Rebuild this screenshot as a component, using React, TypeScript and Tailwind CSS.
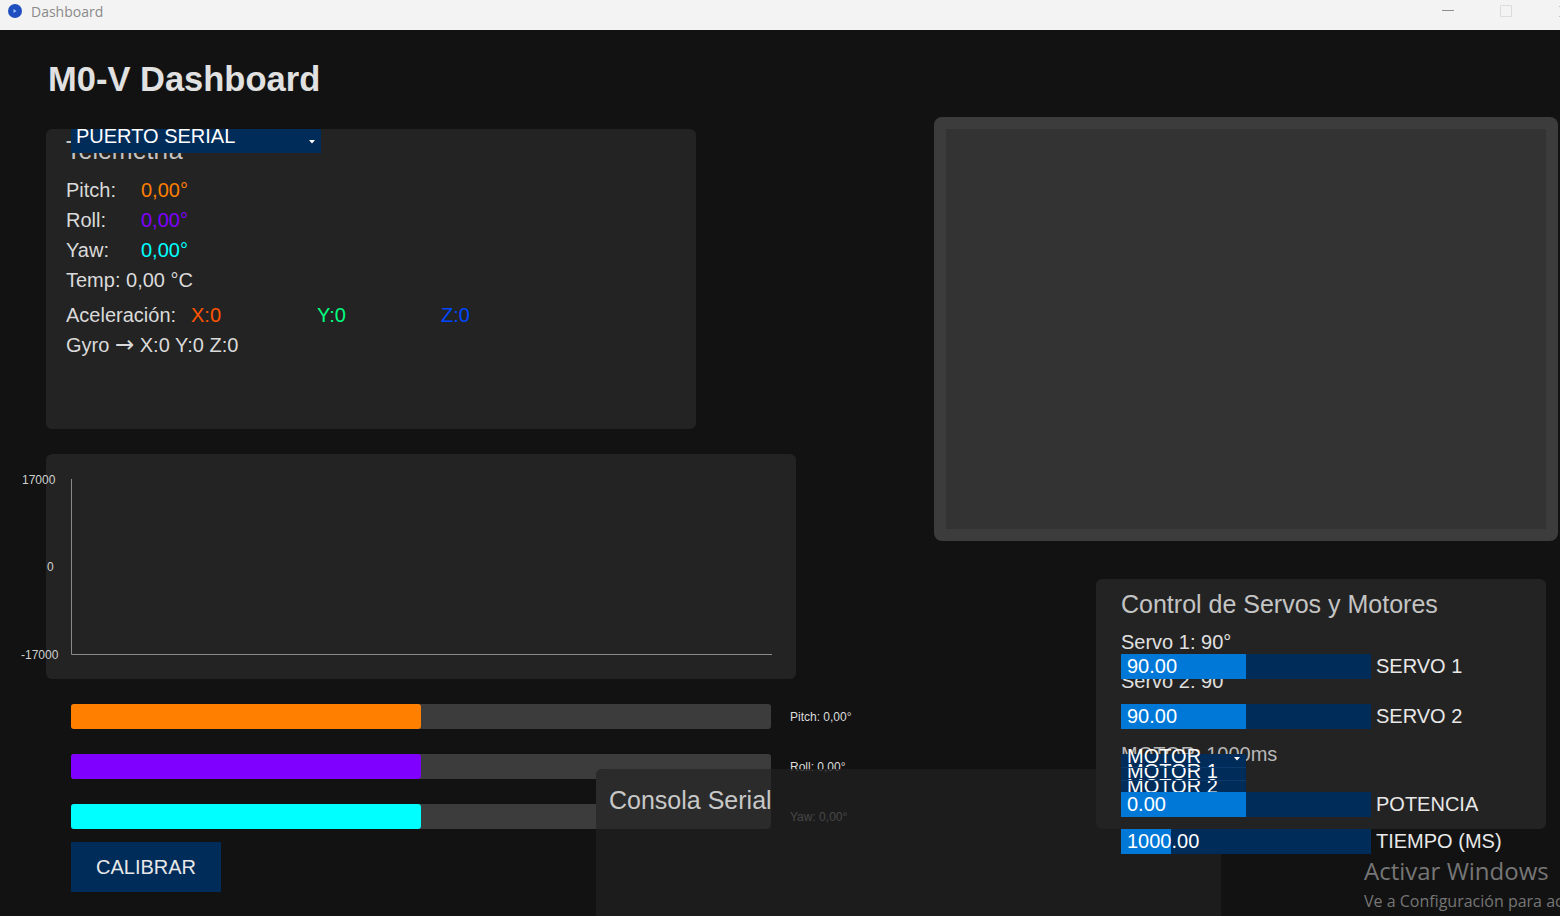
import React from 'react';

const sans = "font-['Liberation_Sans',Arial,sans-serif]";

function TitleBar() {
  return (
    <div className="flex h-[30px] items-start overflow-hidden bg-[#f3f3f3]">
      <div className="ml-[8px] mt-[4px] flex h-[14px] w-[14px] items-center justify-center rounded-full bg-[#1f4fbf]">
        <svg width="6" height="6" viewBox="0 0 6 6">
          <path d="M1.5 1 L4.5 3 L1.5 5 Z" fill="#9fc3ff" />
        </svg>
      </div>
      <span className="ml-[9px] pt-[2px] font-['Open_Sans',sans-serif] text-[14px] leading-[20px] text-[#8a8a8a]">
        Dashboard
      </span>
      <div className="flex-1" />
      <div className="mr-[-33px] flex">
        <div className="flex h-[30px] w-[58px] justify-center pt-[10px]">
          <div className="h-[1px] w-[12px] bg-[#8c8c8c]" />
        </div>
        <div className="flex h-[30px] w-[58px] justify-center pt-[5px]">
          <div className="h-[12px] w-[12px] rounded-[1px] border border-[#dcdcdc]" />
        </div>
        <div className="flex h-[30px] w-[58px] justify-center pt-[6px]">
          <svg width="11" height="11" viewBox="0 0 11 11">
            <path d="M0.5 0.5 L10.5 10.5 M10.5 0.5 L0.5 10.5" stroke="#8c8c8c" strokeWidth="1" />
          </svg>
        </div>
      </div>
    </div>
  );
}

function TeleRow({ label, value, color }: { label: string; value: string; color: string }) {
  return (
    <div className="flex h-[30px] items-center text-[20px] leading-[30px]">
      <span className="w-[75px] text-[#dadada]">{label}</span>
      <span className={color}>{value}</span>
    </div>
  );
}

function Telemetry() {
  return (
    <div className="relative mt-[32px] h-[300px] w-[650px] rounded-[6px] bg-[#232323] pl-[20px] pt-[6px]">
      <div className="text-[25px] leading-[30px] text-[#c4c4c4]">Telemetría</div>
      <div className="mt-[10px]">
        <TeleRow label="Pitch:" value="0,00°" color="text-[#ff7f00]" />
        <TeleRow label="Roll:" value="0,00°" color="text-[#8000ff]" />
        <TeleRow label="Yaw:" value="0,00°" color="text-[#00ffff]" />
        <div className="h-[30px] text-[20px] leading-[30px] text-[#dadada]">Temp: 0,00 °C</div>
        <div className="mt-[5px] flex h-[30px] items-center text-[20px] leading-[30px]">
          <span className="w-[125px] text-[#dadada]">Aceleración:</span>
          <span className="w-[126px] text-[#ff5500]">X:0</span>
          <span className="w-[124px] text-[#00ff80]">Y:0</span>
          <span className="text-[#0048ff]">Z:0</span>
        </div>
        <div className="h-[30px] text-[20px] leading-[30px] text-[#dadada]">
          Gyro <span className="font-['DejaVu_Sans',sans-serif] text-[23px] leading-[20px]">→</span> X:0 Y:0 Z:0
        </div>
      </div>

      {/* combo de puerto, encima del título */}
      <div className="absolute left-[25px] top-0 h-[24px] w-[250px] overflow-hidden bg-[#002c5a]">
        <span className="absolute left-[5px] top-[-3px] text-[20px] leading-[20px] text-white">PUERTO SERIAL</span>
        <svg className="absolute right-[6px] top-[11px]" width="6" height="4" viewBox="0 0 6 4">
          <path d="M0 0 H6 L3 3.5 Z" fill="#ffffff" />
        </svg>
      </div>
    </div>
  );
}

function Chart() {
  return (
    <div className="relative mt-[25px] h-[225px] w-[750px] rounded-[6px] bg-[#232323] text-[12px] leading-[14px] text-[#cfcfcf]">
      <span className="absolute left-[-24px] top-[19px]">17000</span>
      <span className="absolute left-[1px] top-[106px]">0</span>
      <span className="absolute left-[-25px] top-[194px]">-17000</span>
      <svg className="absolute left-[25px] top-[25px]" width="702" height="177" viewBox="0 0 702 177">
        <path d="M0.5 0 V175.5 H701" stroke="#8a8a8a" strokeWidth="1" fill="none" />
      </svg>
    </div>
  );
}

function Bar({ fill, label }: { fill: string; label: string }) {
  return (
    <div className="flex h-[25px] items-center">
      <div className="h-[25px] w-[700px] rounded-[3px] bg-[#3c3c3c]">
        <div className={`h-full w-[350px] rounded-[3px] ${fill}`} />
      </div>
      <span className="ml-[19px] text-[12px] leading-[14px] text-[#dcdcdc]">{label}</span>
    </div>
  );
}

function LeftColumn() {
  return (
    <div className="flex flex-col items-start pl-[46px] pt-[30px]">
      <h1 className="ml-[2px] mt-[2px] h-[35px] text-[34.5px] font-bold leading-[35px] text-[#e1e1e1]">M0-V Dashboard</h1>
      <Telemetry />
      <Chart />
      <div className="mt-[25px] flex flex-col gap-[25px] pl-[25px]">
        <Bar fill="bg-[#ff8000]" label="Pitch: 0,00°" />
        <Bar fill="bg-[#8000ff]" label="Roll: 0,00°" />
        <Bar fill="bg-[#00ffff]" label="Yaw: 0,00°" />
      </div>
      <button className="ml-[25px] mt-[13px] flex h-[50px] w-[150px] items-center justify-center bg-[#002c5a] text-[20px] text-[#e8e8e8]">
        CALIBRAR
      </button>
    </div>
  );
}

function Slider({ value, grab, label }: { value: string; grab: string; label: string }) {
  return (
    <div className="relative z-10 flex h-[25px] items-center">
      <div className="relative h-[25px] w-[250px] bg-[#002c5a]">
        <div className={`h-full bg-[#0078d7] ${grab}`} />
        <span className="absolute left-[6px] top-0 text-[20px] leading-[25px] text-white">{value}</span>
      </div>
      <span className="ml-[5px] text-[20px] leading-[25px] text-[#e8e8e8]">{label}</span>
    </div>
  );
}

function ControlPanel() {
  return (
    <div className="absolute left-[1096px] top-[549px] h-[250px] w-[450px] rounded-[6px] bg-[#232323] pl-[25px] pt-[10px]">
      <div className="text-[25px] leading-[30px] text-[#c4c4c4]">Control de Servos y Motores</div>
      <div className="mt-[13px] text-[20px] leading-[20px] text-[#e0e0e0]">Servo 1: 90°</div>
      <div className="mt-[2px]">
        <Slider value="90.00" grab="w-[125px]" label="SERVO 1" />
      </div>
      <div className="mt-[-8px] text-[20px] leading-[20px] text-[#e0e0e0]">Servo 2: 90°</div>
      <div className="mt-[13px]">
        <Slider value="90.00" grab="w-[125px]" label="SERVO 2" />
      </div>
      <div className="mt-[15px] text-[20px] leading-[20px] text-[#b8b8b8]">MOTOR: 1000ms</div>
      <div className="relative z-10 mt-[-10px] h-[38px] w-[125px] bg-[#002c5a]">
        <div className="absolute left-[6px] top-[-5px] whitespace-nowrap text-[20px] leading-[15px] text-white">
          <div>MOTOR</div>
          <div>MOTOR 1</div>
          <div>MOTOR 2</div>
        </div>
        <div className="absolute left-0 top-[13px] h-[1px] w-full bg-[#0a3a6c]" />
        <div className="absolute left-0 top-[26px] h-[1px] w-full bg-[#0a3a6c]" />
        <svg className="absolute right-[6px] top-[3px]" width="6" height="4" viewBox="0 0 6 4">
          <path d="M0 0 H6 L3 3.5 Z" fill="#ffffff" />
        </svg>
      </div>
      <Slider value="0.00" grab="w-[125px]" label="POTENCIA" />
      <div className="mt-[12px]">
        <Slider value="1000.00" grab="w-[50px]" label="TIEMPO (MS)" />
      </div>
    </div>
  );
}

function Console() {
  return (
    <div className="absolute left-[596px] top-[739px] h-[147px] w-[625px] rounded-tl-[6px] bg-[rgba(31,31,31,0.8)]">
      <div className="h-[60px] w-[175px] rounded-tl-[6px] rounded-br-[6px] bg-[#2b2b2b] pl-[13px] pt-[16px]">
        <div className="whitespace-nowrap text-[25px] leading-[30px] text-[#c8c8c8]">Consola Serial</div>
      </div>
    </div>
  );
}

function CameraPanel() {
  return (
    <div className="absolute left-[934px] top-[87px] h-[424px] w-[624px] rounded-[8px] bg-[#3c3c3c] p-[12px]">
      <div className="h-full w-full bg-[#333333]" />
    </div>
  );
}

export default function App() {
  return (
    <div className={`h-[916px] w-[1560px] overflow-hidden bg-[#121212] ${sans}`}>
      <TitleBar />
      <div className="relative h-[886px]">
        <LeftColumn />
        <CameraPanel />
        <Console />
        <ControlPanel />
        <div className="pointer-events-none absolute left-[1364px] top-[826px] whitespace-nowrap font-['Open_Sans',sans-serif] text-[#767676]">
          <div className="text-[24px] leading-[30px]">Activar Windows</div>
          <div className="mt-[5px] text-[16px] leading-[20px]">Ve a Configuración para activar Windows.</div>
        </div>
      </div>
    </div>
  );
}
